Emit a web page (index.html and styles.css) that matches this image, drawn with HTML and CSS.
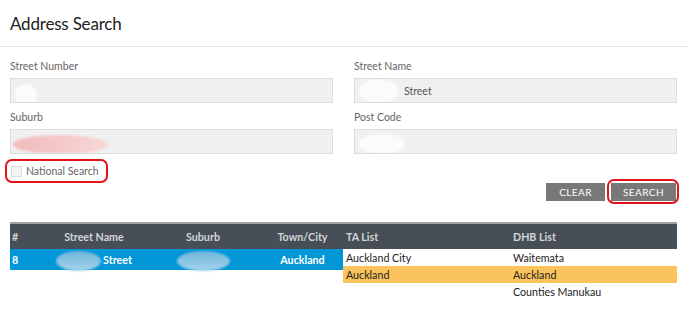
FILE: index.html
```html
<!DOCTYPE html>
<html lang="en">
<head>
    <meta charset="UTF-8">
    <meta name="viewport" content="width=device-width, initial-scale=1.0">
    <title>Address Search</title>
    <link rel="stylesheet" href="styles.css">
</head>
<body>
    <header class="page-title">
        <h1>Address Search</h1>
    </header>
    <div class="content">
        <div class="fields">
            <div class="field">
                <label>Street Number</label>
                <div class="input"><span class="blob blob-number"></span></div>
            </div>
            <div class="field">
                <label>Street Name</label>
                <div class="input"><span class="blob blob-name"></span>Street</div>
            </div>
            <div class="field">
                <label>Suburb</label>
                <div class="input"><span class="blob blob-suburb"></span></div>
            </div>
            <div class="field">
                <label>Post Code</label>
                <div class="input"><span class="blob blob-post"></span></div>
            </div>
        </div>
        <div class="national">
            <label class="check marked"><span class="box"></span>National Search</label>
        </div>
        <div class="actions">
            <button class="btn">CLEAR</button>
            <button class="btn marked">SEARCH</button>
        </div>
        <div class="results">
            <div class="results-head">
                <div class="col c-num">#</div>
                <div class="col c-street">Street Name</div>
                <div class="col c-suburb">Suburb</div>
                <div class="col c-town">Town/City</div>
                <div class="col c-ta">TA List</div>
                <div class="col c-dhb">DHB List</div>
            </div>
            <div class="results-row">
                <div class="selected">
                    <div class="col c-num">8</div>
                    <div class="col c-street"><span class="blob blob-row-street"></span>Street</div>
                    <div class="col c-suburb"><span class="blob blob-row-suburb"></span></div>
                    <div class="col c-town">Auckland</div>
                </div>
                <div class="lists">
                    <div class="list-row">
                        <div class="col c-ta">Auckland City</div>
                        <div class="col c-dhb">Waitemata</div>
                    </div>
                    <div class="list-row match">
                        <div class="col c-ta">Auckland</div>
                        <div class="col c-dhb">Auckland</div>
                    </div>
                    <div class="list-row">
                        <div class="col c-ta"></div>
                        <div class="col c-dhb">Counties Manukau</div>
                    </div>
                </div>
            </div>
        </div>
    </div>
</body>
</html>
```

FILE: styles.css
```css
body {
    font-family: Lato, "Open Sans", sans-serif;
    margin: 0;
    padding: 0;
    background: #fff;
    color: #333;
}
.page-title {
    border-bottom: 1px solid #e2e2e2;
    padding: 12px 10px 11px;
}
.page-title h1 {
    margin: 0;
    font-size: 17px;
    letter-spacing: -0.2px;
    font-weight: 400;
    line-height: 23px;
    color: #222;
}
.content {
    padding: 0 10px;
}
.fields {
    display: grid;
    grid-template-columns: 1fr 1fr;
    column-gap: 21px;
    row-gap: 6px;
    padding-top: 11px;
}
.field label {
    display: block;
    font-size: 10.5px;
    line-height: 17px;
    color: #666;
    margin-bottom: 3px;
}
.input {
    height: 23px;
    background: #f0f0f0;
    border: 1px solid #dcdcdc;
    display: flex;
    align-items: center;
    padding-left: 4px;
    font-size: 10.5px;
    color: #555;
    overflow: hidden;
}
.blob {
    display: inline-block;
    border-radius: 50%;
    filter: blur(1px);
}
.blob-number {
    width: 22px;
    height: 22px;
    background: #fbfbfb;
    margin-top: 8px;
}
.blob-name {
    width: 40px;
    height: 24px;
    background: #fbfbfb;
    margin-right: 5px;
}
.blob-suburb {
    width: 95px;
    height: 19px;
    background: linear-gradient(90deg, #f2bcbc, #f8d6d6);
    margin-top: 6px;
    margin-left: -2px;
}
.blob-post {
    width: 46px;
    height: 20px;
    background: #fbfbfb;
    margin-top: 4px;
}
.national {
    display: flex;
    padding: 9px 0 0 1px;
}
.check {
    display: flex;
    align-items: center;
    gap: 4px;
    font-size: 10.5px;
    color: #666;
    line-height: 16px;
}
.box {
    width: 9px;
    height: 9px;
    border: 1px solid #ddd;
    background: #f4f4f4;
}
.marked {
    position: relative;
}
.marked::after {
    content: "";
    position: absolute;
    border: 2px solid #e3131c;
    border-radius: 7px;
}
.check.marked::after {
    left: -6px;
    right: -9px;
    top: -4px;
    bottom: -4px;
}
.actions {
    display: flex;
    justify-content: flex-end;
    gap: 6px;
    padding-right: 1px;
    margin-top: 4px;
}
.btn {
    background: #787878;
    color: #fff;
    border: none;
    font-family: Lato, "Open Sans", sans-serif;
    font-size: 10px;
    letter-spacing: 0.4px;
    height: 18px;
    padding: 0;
    width: 59px;
}
.btn.marked {
    width: 65px;
}
.btn.marked::after {
    left: -4px;
    right: -3px;
    top: -4px;
    bottom: -3px;
}
.results {
    margin-top: 21px;
    font-size: 10.7px;
    font-weight: 700;
}
.results-head {
    display: flex;
    background: #474e57;
    border-top: 2px solid #9ca2a8;
    color: #d2d5d8;
    height: 25px;
    align-items: center;
}
.col {
    flex: none;
    white-space: nowrap;
}
.c-num { width: 30px; padding-left: 2px; box-sizing: border-box; }
.c-street { width: 108px; text-align: center; }
.c-suburb { width: 110px; text-align: center; }
.c-town { width: 85px; text-align: center; padding-left: 4px; box-sizing: border-box; }
.c-ta { width: 168px; padding-left: 3px; box-sizing: border-box; }
.c-dhb { width: 166px; padding-left: 2px; box-sizing: border-box; }
.results-row {
    display: flex;
    align-items: flex-start;
}
.selected {
    display: flex;
    align-items: center;
    background: #0096d8;
    color: #fff;
    height: 21px;
}
.selected .c-street {
    display: flex;
    align-items: center;
    justify-content: center;
    gap: 2px;
}
.selected .c-suburb {
    display: flex;
    justify-content: center;
}
.blob-row-street {
    width: 45px;
    height: 20px;
    background: linear-gradient(180deg, #6fb6dc, #a5d3ea);
    margin-top: 3px;
}
.blob-row-suburb {
    width: 53px;
    height: 20px;
    background: linear-gradient(180deg, #6fb6dc, #a5d3ea);
    margin-top: 3px;
}
.lists {
    font-weight: 400;
    color: #222;
    font-size: 10.7px;
}
.list-row {
    display: flex;
    height: 17px;
    align-items: center;
}
.list-row.match {
    background: #fbc35b;
}
```
